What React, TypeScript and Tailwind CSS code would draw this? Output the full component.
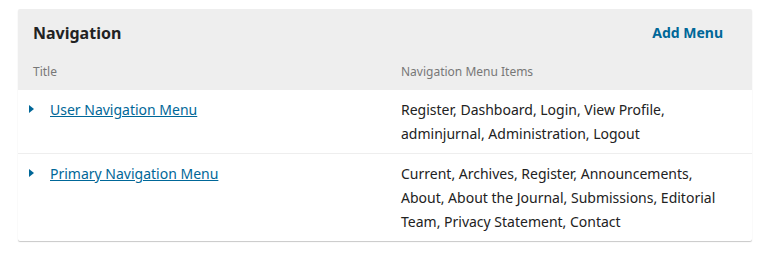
const rows = [
  {
    title: "User Navigation Menu",
    items: "Register, Dashboard, Login, View Profile, adminjurnal, Administration, Logout",
  },
  {
    title: "Primary Navigation Menu",
    items:
      "Current, Archives, Register, Announcements, About, About the Journal, Submissions, Editorial Team, Privacy Statement, Contact",
  },
];

function Caret() {
  return (
    <svg width="5" height="8" viewBox="0 0 5 8" className="mt-[7px] shrink-0">
      <path d="M0 0 L5 4 L0 8 Z" fill="#006798" />
    </svg>
  );
}

export default function App() {
  return (
    <div className="min-h-[258px] bg-white pl-[18px] pr-[15px] pt-[9px] font-['Noto_Sans',sans-serif] text-[#222]">
      <div className="w-[734px] overflow-hidden rounded-[2px] bg-white shadow-[0_1px_1px_rgba(0,0,0,0.22)]">
        <div className="bg-[#eeeeee] pb-[9px] pt-[12px]">
          <div className="flex items-center justify-between pl-[15px] pr-[29px]">
            <h2 className="text-base leading-6 font-bold text-[#222]">Navigation</h2>
            <button className="text-sm leading-6 font-bold text-[#006798]">Add Menu</button>
          </div>
          <div className="mt-[18px] grid grid-cols-[368px_1fr] text-xs leading-[18px] text-[#777]">
            <div className="pl-[15px]">Title</div>
            <div className="pl-[15px]">Navigation Menu Items</div>
          </div>
        </div>
        {rows.map((r, i) => (
          <div
            key={r.title}
            className={`grid grid-cols-[368px_1fr] pb-[7px] pt-[8px] text-sm leading-6 ${
              i < rows.length - 1 ? "border-b border-[#eeeeee]" : ""
            }`}
          >
            <div className="flex items-start gap-[16px] pl-[11px]">
              <Caret />
              <a href="#" className="text-[#006798] underline">
                {r.title}
              </a>
            </div>
            <div className="pl-[15px] pr-[30px]">{r.items}</div>
          </div>
        ))}
      </div>
    </div>
  );
}
